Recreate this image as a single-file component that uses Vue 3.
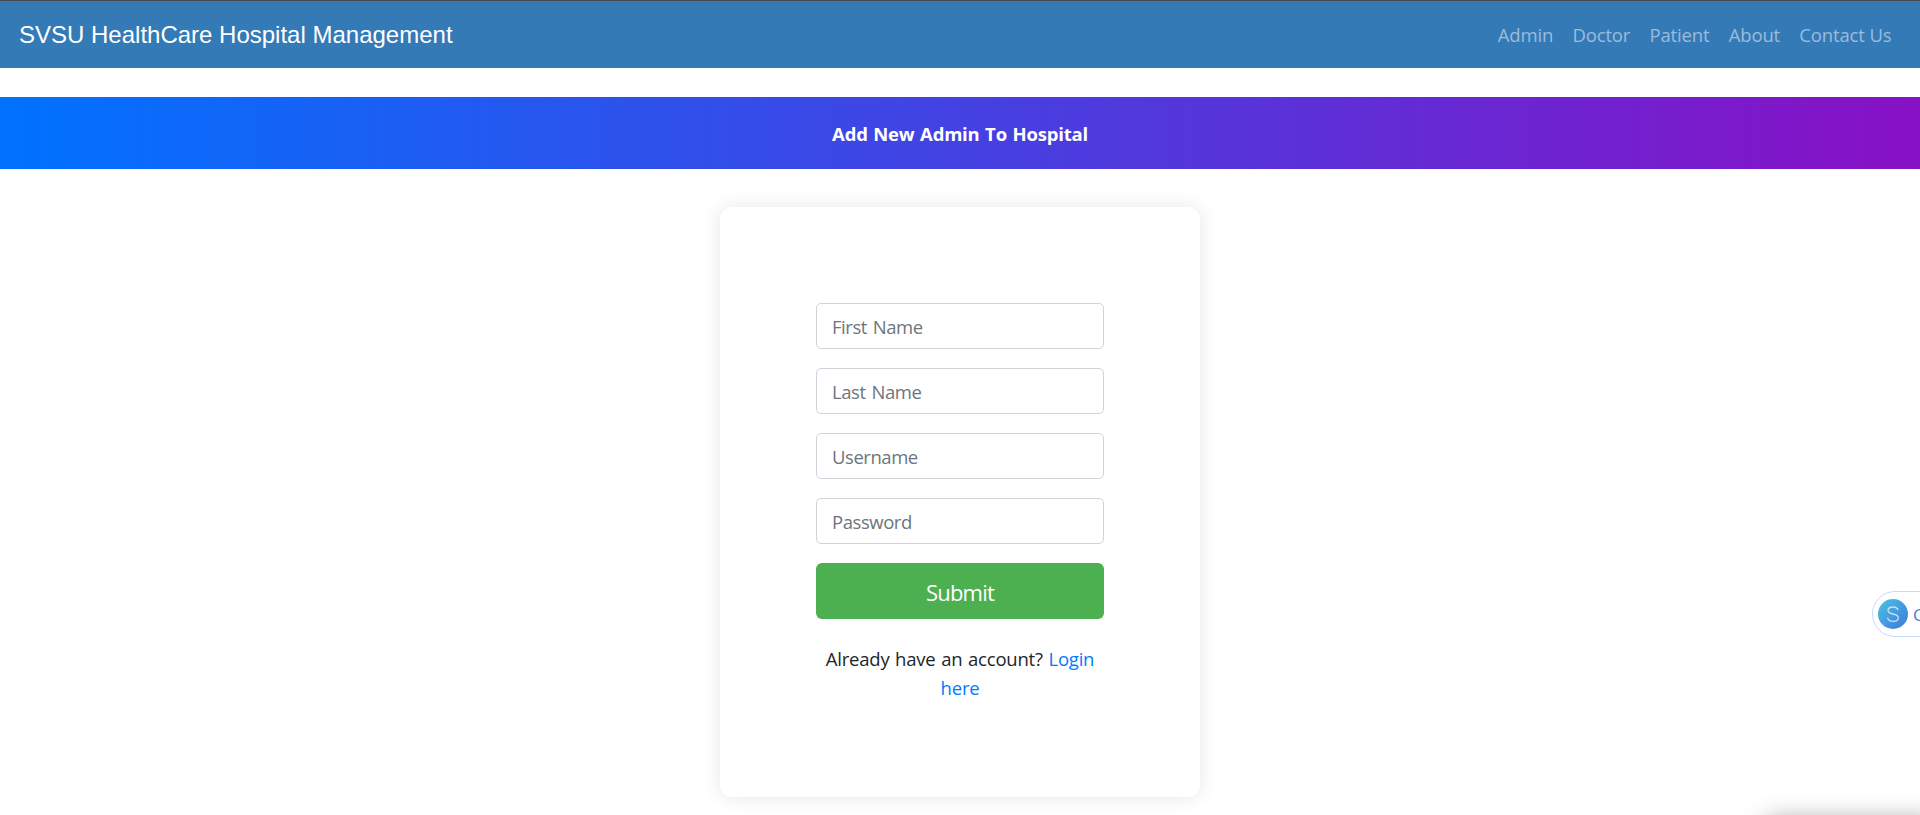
<script setup>
const links = ['Admin', 'Doctor', 'Patient', 'About', 'Contact Us']
const fields = [
  { label: 'First Name', type: 'text' },
  { label: 'Last Name', type: 'text' },
  { label: 'Username', type: 'text' },
  { label: 'Password', type: 'password' },
]
</script>

<template>
  <div class="page">
    <nav class="navbar">
      <a class="brand">SVSU HealthCare Hospital Management</a>
      <div class="links">
        <a v-for="link in links" :key="link" class="link">{{ link }}</a>
      </div>
    </nav>
    <header class="banner"><h1 class="title">Add New Admin To Hospital</h1></header>
    <main class="card">
      <form class="form" @submit.prevent>
        <input v-for="f in fields" :key="f.label" class="field" :type="f.type" :placeholder="f.label" />
        <button class="submit" type="submit">Submit</button>
      </form>
      <p class="hint">Already have an account? <a class="login">Login<br />here</a></p>
    </main>
    <div class="assistant">
      <svg class="badge" width="30" height="30" viewBox="0 0 30 30">
        <defs>
          <linearGradient id="badgeFill" x1="0" y1="0" x2="1" y2="1">
            <stop offset="0" stop-color="#4cc3e4" />
            <stop offset="1" stop-color="#3b78dc" />
          </linearGradient>
        </defs>
        <circle cx="15" cy="15" r="15" fill="url(#badgeFill)" />
        <path d="M20 11.2C19.5 9 17.7 8 15 8C12 8 10 9.300 10 11.500C10 13.700 12 14.300 15 15C18.200 15.700 20.300 16.500 20.300 18.800C20.300 21 18.200 22.400 15.200 22.400C12 22.400 10 21 9.600 18.600" fill="none" stroke="#c5e2f8" stroke-width="1.3" />
      </svg>
      <span class="assistant-label">C</span>
    </div>
    <div class="popup"></div>
  </div>
</template>

<style>
body { margin: 0; background: #fff; }
</style>

<style scoped>
.page {
  position: relative;
  box-sizing: border-box;
  height: 815px;
  overflow: hidden;
  background: #fff;
  border-top: 1px solid #4a4a4a;
  color: #212529;
  font-family: "Open Sans", "Noto Sans", sans-serif;
  font-size: 18.5px;
}
.navbar {
  box-sizing: border-box;
  height: 67px;
  padding: 0 19px;
  display: flex;
  align-items: center;
  justify-content: space-between;
  background: #337ab7;
}
.brand {
  color: #fff;
  font: 24px/36px "Liberation Sans", Arial, sans-serif;
}
.links { display: flex; }
.link {
  padding: 0 9.600px;
  color: rgba(255, 255, 255, 0.5);
  font-size: 18.5px;
  line-height: 29px;
  letter-spacing: -0.14px;
}
.banner {
  height: 72px;
  margin-top: 29px;
  display: flex;
  align-items: center;
  justify-content: center;
  background: linear-gradient(to right, #0072ff, #8811c5);
}
.title {
  margin: 0;
  padding-top: 1px;
  color: #fff;
  font-size: 18.5px;
  font-weight: 700;
  line-height: 29px;
  letter-spacing: -0.2px;
  word-spacing: 1px;
}
.card {
  box-sizing: border-box;
  width: 480px;
  height: 590px;
  margin: 38px auto 0;
  padding: 96px;
  border-radius: 12px;
  box-shadow: 0 0 19px rgba(0, 0, 0, 0.1);
}
.form { display: flex; flex-direction: column; gap: 19px; }
.field {
  box-sizing: border-box;
  width: 100%;
  height: 46px;
  padding: 1px 14px 0 15px;
  border: 1px solid #ced4da;
  border-radius: 5px;
  background: #fff;
  font-family: inherit;
  font-size: 18.5px;
  letter-spacing: -0.45px;
  word-spacing: 1.5px;
}
.field::placeholder { color: #6c757d; opacity: 1; }
.submit {
  height: 56px;
  padding: 2px 0 0;
  border: 0;
  border-radius: 6px;
  background: #4caf50;
  color: #fff;
  font-family: inherit;
  font-size: 22px;
  letter-spacing: -0.8px;
}
.hint {
  margin: 25px 0 0;
  text-align: center;
  line-height: 29px;
  letter-spacing: -0.2px;
  word-spacing: 1px;
  white-space: nowrap;
}
.login { color: #007bff; }
.assistant {
  position: absolute;
  left: 1872px;
  top: 590px;
  box-sizing: border-box;
  width: 90px;
  height: 46px;
  padding-left: 5px;
  display: flex;
  align-items: center;
  gap: 5px;
  border: 1px solid #c4d9ff;
  border-radius: 23px;
  background: #fff;
}
.assistant-label {
  color: #4a80dc;
  font-size: 17px;
}
.popup {
  position: absolute;
  left: 1766px;
  top: 818px;
  width: 170px;
  height: 40px;
  border-radius: 8px;
  box-shadow: 0 0 24px rgba(0, 0, 0, 0.35);
}
</style>
